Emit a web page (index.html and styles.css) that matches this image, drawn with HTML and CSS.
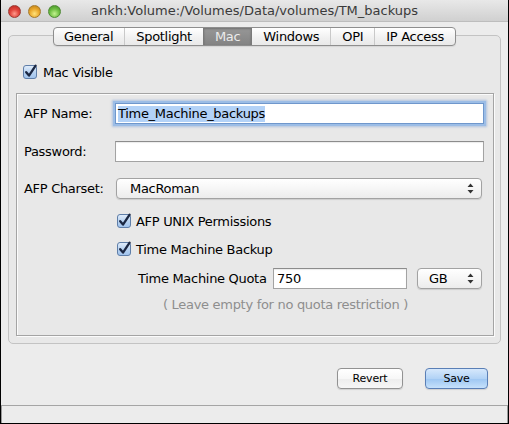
FILE: index.html
```html
<!DOCTYPE html>
<html>
<head>
<meta charset="utf-8">
<link rel="stylesheet" href="styles.css">
</head>
<body>
<div class="window">
  <div class="titlebar">
    <div class="lights">
      <span class="light red"></span>
      <span class="light yellow"></span>
      <span class="light green"></span>
    </div>
    <div class="title">ankh:Volume:/Volumes/Data/volumes/TM_backups</div>
    <div></div>
  </div>
  <div class="content">
    <div class="panel">
      <div class="tabs">
        <span class="tab">General</span>
        <span class="tab">Spotlight</span>
        <span class="tab active">Mac</span>
        <span class="tab">Windows</span>
        <span class="tab">OPI</span>
        <span class="tab">IP Access</span>
      </div>
      <div class="check check-top">
        <svg class="cb" width="14" height="14" viewBox="0 0 14 14"><defs><linearGradient id="g1" x1="0" y1="0" x2="0" y2="1"><stop offset="0" stop-color="#e3eefb"/><stop offset="0.5" stop-color="#b9d3f1"/><stop offset="1" stop-color="#9fc2ec"/></linearGradient></defs><rect x="0.5" y="0.5" width="13" height="13" rx="2.5" fill="url(#g1)" stroke="#5f7ea8"/><path d="M3.2 7.2 L6 10.6 L12.6 0.6" fill="none" stroke="#1b2742" stroke-width="2.3" stroke-linecap="round" stroke-linejoin="round"/></svg>
        <span>Mac Visible</span>
      </div>
      <div class="group">
        <div class="row row-first">
          <span class="label">AFP Name:</span>
          <div class="field focused"><span class="selected">Time_Machine_backups</span></div>
        </div>
        <div class="row row-second">
          <span class="label">Password:</span>
          <div class="field"></div>
        </div>
        <div class="row row-third">
          <span class="label">AFP Charset:</span>
          <div class="select wide">
            <span>MacRoman</span>
            <svg class="arrows" width="7" height="11" viewBox="0 0 7 11"><path d="M3.5 0.5 L6.5 4 L0.5 4 Z M0.5 7 L6.5 7 L3.5 10.5 Z" fill="#333"/></svg>
          </div>
        </div>
        <div class="check check-first">
          <svg class="cb" width="14" height="14" viewBox="0 0 14 14"><defs><linearGradient id="g2" x1="0" y1="0" x2="0" y2="1"><stop offset="0" stop-color="#e3eefb"/><stop offset="0.5" stop-color="#b9d3f1"/><stop offset="1" stop-color="#9fc2ec"/></linearGradient></defs><rect x="0.5" y="0.5" width="13" height="13" rx="2.5" fill="url(#g2)" stroke="#5f7ea8"/><path d="M3.2 7.2 L6 10.6 L12.6 0.6" fill="none" stroke="#1b2742" stroke-width="2.3" stroke-linecap="round" stroke-linejoin="round"/></svg>
          <span>AFP UNIX Permissions</span>
        </div>
        <div class="check check-second">
          <svg class="cb" width="14" height="14" viewBox="0 0 14 14"><defs><linearGradient id="g3" x1="0" y1="0" x2="0" y2="1"><stop offset="0" stop-color="#e3eefb"/><stop offset="0.5" stop-color="#b9d3f1"/><stop offset="1" stop-color="#9fc2ec"/></linearGradient></defs><rect x="0.5" y="0.5" width="13" height="13" rx="2.5" fill="url(#g3)" stroke="#5f7ea8"/><path d="M3.2 7.2 L6 10.6 L12.6 0.6" fill="none" stroke="#1b2742" stroke-width="2.3" stroke-linecap="round" stroke-linejoin="round"/></svg>
          <span>Time Machine Backup</span>
        </div>
        <div class="quota">
          <span class="quota-label">Time Machine Quota</span>
          <div class="field quota-field">750</div>
          <div class="select unit">
            <span>GB</span>
            <svg class="arrows" width="7" height="11" viewBox="0 0 7 11"><path d="M3.5 0.5 L6.5 4 L0.5 4 Z M0.5 7 L6.5 7 L3.5 10.5 Z" fill="#333"/></svg>
          </div>
        </div>
        <div class="hint">( Leave empty for no quota restriction )</div>
      </div>
    </div>
    <div class="buttons">
      <button class="btn">Revert</button>
      <button class="btn primary">Save</button>
    </div>
  </div>
  <div class="statusbar"></div>
</div>
</body>
</html>
```
FILE: styles.css
```css
* { box-sizing: border-box; }
html, body { margin: 0; padding: 0; }
body {
  width: 509px;
  height: 424px;
  overflow: hidden;
  background: #ececec;
  font-family: "DejaVu Sans", sans-serif;
  font-size: 13px;
  letter-spacing: -0.3px;
  color: #000;
}
.window {
  width: 509px;
  height: 424px;
  display: flex;
  flex-direction: column;
  border: 1px solid #000;
  border-top: none;
  background: #ececec;
}
.titlebar {
  height: 22px;
  flex: none;
  display: grid;
  grid-template-columns: 1fr auto 1fr;
  align-items: center;
  background: linear-gradient(#e8e8e8, #d0d0d0);
  border-bottom: 1px solid #bdbdbd;
}
.lights {
  display: flex;
  gap: 7px;
  padding-left: 7px;
  padding-top: 1px;
}
.light {
  width: 13px;
  height: 13px;
  border-radius: 50%;
  display: block;
}
.red {
  background: radial-gradient(circle at 50% 70%, #ff9a8c 0, #e2463d 45%, #b6231b 100%);
  border: 1px solid #9c3a33;
}
.yellow {
  background: radial-gradient(circle at 50% 70%, #ffe27a 0, #eaa82c 50%, #b77a12 100%);
  border: 1px solid #a67a2c;
}
.green {
  background: radial-gradient(circle at 50% 70%, #c2f28e 0, #6fbf43 50%, #3f8a22 100%);
  border: 1px solid #4f8a35;
}
.title {
  font-size: 13px;
  letter-spacing: 0;
  color: #3a3a3a;
  white-space: nowrap;
}
.content {
  flex: 1;
  display: flex;
  flex-direction: column;
  padding: 13px 7px 0 7px;
}
.panel {
  height: 309px;
  flex: none;
  display: flex;
  flex-direction: column;
  border: 1px solid #c3c3c3;
  border-radius: 5px;
  background: #e8e8e8;
}
.tabs {
  align-self: center;
  margin-top: -9px;
  height: 19px;
  display: flex;
  border: 1px solid #8e8e8e;
  border-radius: 4px;
  background: linear-gradient(#ffffff, #f0f0f0 60%, #e9e9e9);
  box-shadow: 0 1px 1px rgba(0,0,0,0.08);
  overflow: hidden;
}
.tab {
  padding: 0 11px;
  line-height: 17px;
  border-left: 1px solid #c9c9c9;
  white-space: nowrap;
}
.tab:first-child { border-left: none; padding-left: 10px; }
.tab.active {
  background: linear-gradient(#979797, #838383);
  color: #ebebeb;
  border-left-color: #7a7a7a;
  box-shadow: inset 0 1px 2px rgba(0,0,0,0.25);
}
.tab.active + .tab { border-left-color: #7a7a7a; }
.check {
  display: flex;
  align-items: center;
  height: 16px;
  gap: 5px;
}
.cb { display: block; flex: none; overflow: visible; }
.check-top { margin: 18px 0 0 14px; gap: 6px; }
.group {
  flex: 1;
  margin: 13px 6px 7px 7px;
  border: 1px solid #a4a4a4;
  box-shadow: inset 1px 1px 0 #fbfbfb, 1px 1px 0 #fbfbfb;
  display: flex;
  flex-direction: column;
}
.row {
  display: flex;
  align-items: center;
  height: 21px;
  padding-left: 7px;
}
.row-first { margin-top: 9px; }
.row-second { margin-top: 17px; }
.row-third { margin-top: 16px; }
.label { width: 91px; flex: none; }
.field {
  width: 369px;
  height: 21px;
  background: #fff;
  border: 1px solid #a3a3a3;
  border-top-color: #8c8c8c;
  box-shadow: inset 0 1px 1px rgba(0,0,0,0.08);
  padding: 0 2px;
  display: flex;
  align-items: center;
  white-space: nowrap;
}
.field.focused {
  border-color: #6f97cc;
  box-shadow: 0 0 0 2px #9cbde6, 0 0 2px 3px rgba(120,160,215,0.5);
}
.selected {
  background: #b3d2f7;
  line-height: 16px;
}
.select {
  height: 21px;
  display: flex;
  align-items: center;
  justify-content: space-between;
  border: 1px solid #a2a2a2;
  border-radius: 4px;
  background: linear-gradient(#ffffff, #f6f6f6 50%, #ececec);
  box-shadow: 0 1px 1px rgba(0,0,0,0.12);
}
.select.wide {
  width: 366px;
  margin-left: 1px;
  padding: 0 7px 0 13px;
}
.arrows { display: block; }
.check-first { margin: 14px 0 0 100px; }
.check-second { margin: 12px 0 0 100px; }
.quota {
  display: flex;
  align-items: center;
  height: 21px;
  margin: 11px 0 0 121px;
}
.quota-label { width: 135px; flex: none; }
.quota-field { width: 134px; padding-left: 3px; }
.select.unit {
  width: 65px;
  margin-left: 10px;
  padding: 0 7px 0 11px;
}
.hint {
  margin: 8px 0 0 146px;
  line-height: 15px;
  color: #8e8e8e;
  white-space: nowrap;
}
.buttons {
  display: flex;
  justify-content: flex-end;
  gap: 22px;
  margin-top: 24px;
  padding-right: 13px;
}
.btn {
  height: 21px;
  padding: 0;
  font-family: "DejaVu Sans", sans-serif;
  font-size: 11px;
  letter-spacing: -0.2px;
  color: #000;
  border: 1px solid #929292;
  border-radius: 4px;
  background: linear-gradient(#ffffff, #f7f7f7 50%, #ededed 51%, #f6f6f6);
  box-shadow: 0 1px 1px rgba(0,0,0,0.12);
  width: 66px;
}
.btn.primary {
  width: 63px;
  border-color: #5a7fb6;
  background: linear-gradient(#d6e8fc, #b2d3f6 50%, #9dc6f2 51%, #c6e1fb);
}
.statusbar {
  height: 18px;
  flex: none;
  border-top: 1px solid #a5a5a5;
  border-left: 1px solid #9a9a9a;
  border-right: 1px solid #9a9a9a;
  background: #ececec;
}
```
